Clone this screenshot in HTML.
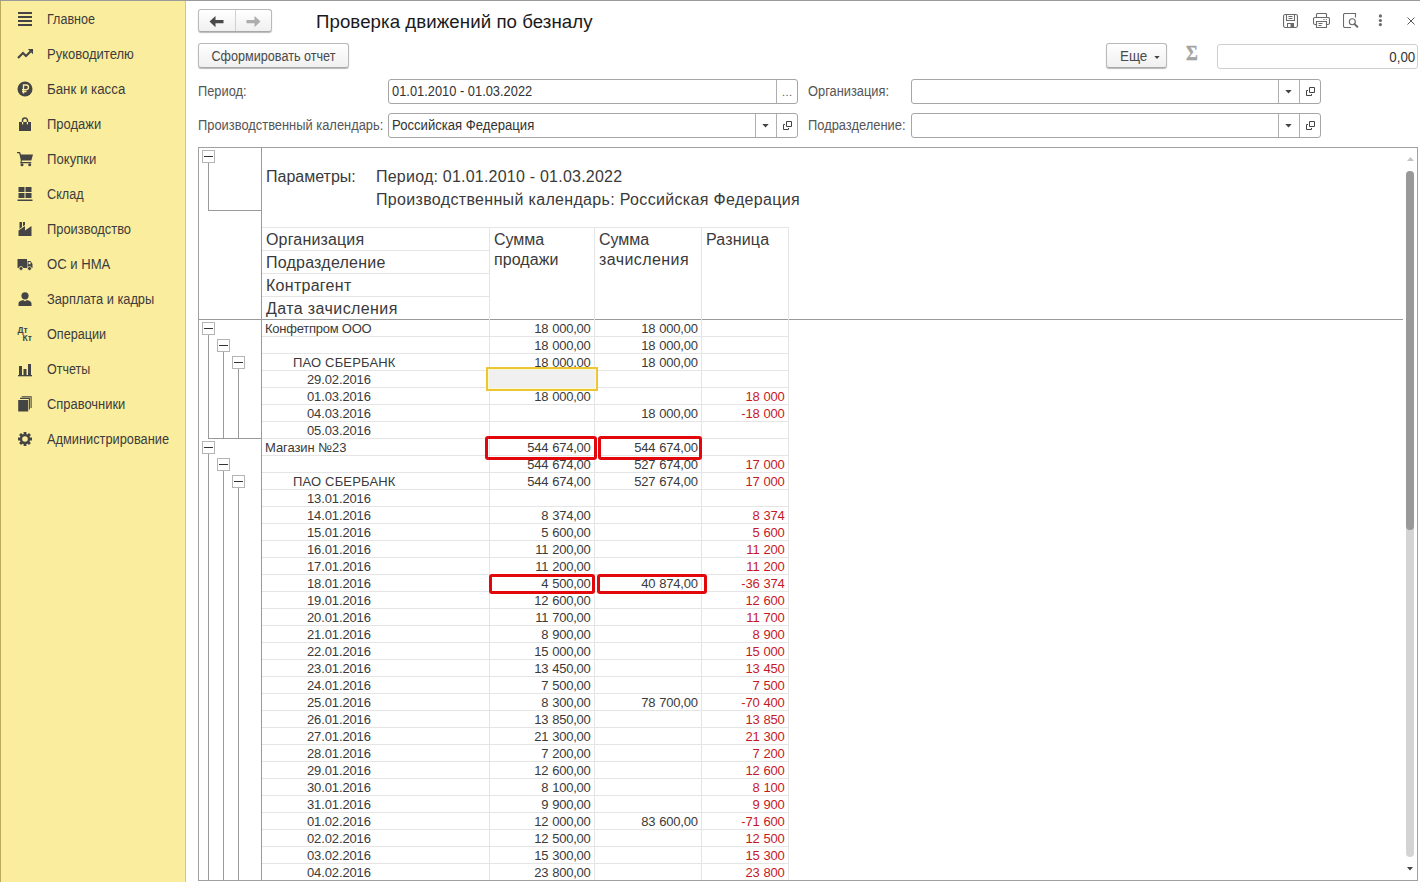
<!DOCTYPE html>
<html lang="ru"><head><meta charset="utf-8"><title>Проверка движений по безналу</title>
<style>
*{box-sizing:border-box;margin:0;padding:0}
html,body{width:1420px;height:882px;overflow:hidden;background:#fff}
body{position:relative;font-family:"Liberation Sans",sans-serif;font-size:13px;color:#333}
.abs{position:absolute}
#side{position:absolute;left:0;top:0;width:186px;height:882px;background:#fbed9e;border-right:1px solid #d9c873;border-left:1px solid #b9a95f}
#topline{position:absolute;left:0;top:0;width:1420px;height:1px;background:#9a9a9a}
.nav{position:absolute;left:47px;font-size:14px;color:#3c3c3c;white-space:nowrap;line-height:16px;transform-origin:0 50%}
.ico{position:absolute;left:17px;width:16px;height:16px}
.lbl{position:absolute;font-size:14px;color:#555;white-space:nowrap;line-height:16px;transform-origin:0 50%}
.btn{position:absolute;border:1px solid #b9b9b9;border-bottom-color:#a8a8a8;border-radius:3px;background:linear-gradient(#ffffff,#f0f0f0);box-shadow:0 1px 1px rgba(0,0,0,0.28);font-size:13px;color:#4a4a4a;white-space:nowrap;text-align:center}
.inp{position:absolute;border:1px solid #a6a6a6;border-radius:3px;background:#fff;height:25px}
.inp .t{position:absolute;left:3px;top:3px;line-height:16px;font-size:14px;color:#333;white-space:nowrap;transform-origin:0 50%}
.sep{position:absolute;top:0;width:1px;height:23px;background:#b0b0b0}
#sheet{position:absolute;left:198px;top:147px;width:1220px;height:734px;border:1px solid #a0a0a0;background:#fff;overflow:hidden}
.hl{position:absolute;height:1px;background:#e5e5e5}
.vl{position:absolute;width:1px;background:#e5e5e5}
.gl{position:absolute;background:#9a9a9a}
.gb{position:absolute;width:13px;height:13px;border:1px solid #b4b4b4;background:#fff}
.gb i{position:absolute;left:1px;top:5px;width:9px;height:1px;background:#333}
.c{position:absolute;font-size:13px;line-height:16px;color:#3a3a3a;white-space:nowrap}
.num{text-align:right;letter-spacing:-0.23px;word-spacing:0.6px}
.red{color:#c41a1f}
.h{position:absolute;font-size:16px;line-height:20px;color:#3a3a3a;white-space:nowrap}
.rb{position:absolute;border:3px solid #e1070b;border-radius:3px}
</style></head>
<body>
<div id="side"></div>
<svg class="ico" style="top:11px" viewBox="0 0 16 16" fill="#444"><rect x="1" y="1" width="14" height="2"/><rect x="1" y="5" width="14" height="2"/><rect x="1" y="9" width="14" height="2"/><rect x="1" y="13" width="14" height="2"/></svg>
<div class="nav" style="top:11px;transform:scaleX(0.8973)">Главное</div>
<svg class="ico" style="top:46px" viewBox="0 0 16 16" fill="#444"><path d="M1 11.900 L6 6.900 L9 9.900 L13.5 5.400" fill="none" stroke="#444" stroke-width="2.100"/><path d="M10.800 3 H16 V8.200 Z"/></svg>
<div class="nav" style="top:46px;transform:scaleX(0.9293)">Руководителю</div>
<svg class="ico" style="top:81px" viewBox="0 0 16 16" fill="#444"><circle cx="8" cy="8" r="7.5"/><path d="M6.5 12.5 V4 H9.2 a2.3 2.3 0 0 1 0 4.6 H5 M5 10.5 H9.5" fill="none" stroke="#fbed9e" stroke-width="1.4"/></svg>
<div class="nav" style="top:81px;transform:scaleX(0.9498)">Банк и касса</div>
<svg class="ico" style="top:116px" viewBox="0 0 16 16" fill="#444"><path d="M2 6 H14 V15 H2 Z"/><path d="M5.5 8 V4.5 a2.5 2.5 0 0 1 5 0 V8" fill="none" stroke="#444" stroke-width="1.5"/><rect x="5" y="6" width="1.2" height="2.4" fill="#fbed9e"/><rect x="9.8" y="6" width="1.2" height="2.4" fill="#fbed9e"/></svg>
<div class="nav" style="top:116px;transform:scaleX(0.927)">Продажи</div>
<svg class="ico" style="top:151px" viewBox="0 0 16 16" fill="#444"><path d="M0 1 H3 L4 3.500 H16 L14.3 9.5 H5 L4.500 11 H14.3 V12.2 H3 L3.900 9.5 L2.200 2.200 H0 Z"/><circle cx="5" cy="13.8" r="1.500"/><circle cx="12.7" cy="13.8" r="1.500"/></svg>
<div class="nav" style="top:151px;transform:scaleX(0.9381)">Покупки</div>
<svg class="ico" style="top:186px" viewBox="0 0 16 16" fill="#444"><rect x="1.5" y="1" width="6" height="5"/><rect x="8.5" y="1" width="6" height="5"/><rect x="1.5" y="7" width="6" height="5"/><rect x="8.5" y="7" width="6" height="5"/><rect x="0.5" y="13.5" width="15" height="1.5"/></svg>
<div class="nav" style="top:186px;transform:scaleX(0.9033)">Склад</div>
<svg class="ico" style="top:221px" viewBox="0 0 16 16" fill="#444"><path d="M1.5 15 V9.5 L8 5 V9.5 L14.5 5 V15 Z"/><path d="M2.5 1 H5 V6 L2.5 8 Z"/><path d="M6 1 H8 V4 L6 5.3 Z"/></svg>
<div class="nav" style="top:221px;transform:scaleX(0.9202)">Производство</div>
<svg class="ico" style="top:256px" viewBox="0 0 16 16" fill="#444"><path d="M0.5 3 H10 V12 H0.5 Z"/><path d="M10.5 5 H13.5 L15.5 8 V12 H10.5 Z"/><rect x="11.5" y="6" width="2" height="2.2" fill="#fbed9e"/><circle cx="4" cy="12.5" r="2" stroke="#fbed9e" stroke-width="0.8"/><circle cx="12.5" cy="12.5" r="2" stroke="#fbed9e" stroke-width="0.8"/></svg>
<div class="nav" style="top:256px;transform:scaleX(0.9349)">ОС и НМА</div>
<svg class="ico" style="top:291px" viewBox="0 0 16 16" fill="#444"><circle cx="8" cy="4.8" r="3.6"/><path d="M1.5 15 V12.5 C1.5 10 4.5 9.5 6 9 L8 10.2 L10 9 C11.5 9.5 14.5 10 14.5 12.500 V15 Z"/></svg>
<div class="nav" style="top:291px;transform:scaleX(0.9152)">Зарплата и кадры</div>
<svg class="ico" style="top:326px" viewBox="0 0 16 16" fill="#444"><text x="0.5" y="6.800" font-size="8.5" font-weight="bold" font-family="Liberation Sans, sans-serif">Дт</text><text x="5.500" y="15.2" font-size="8.5" font-weight="bold" font-family="Liberation Sans, sans-serif">Кт</text></svg>
<div class="nav" style="top:326px;transform:scaleX(0.9025)">Операции</div>
<svg class="ico" style="top:361px" viewBox="0 0 16 16" fill="#444"><rect x="2" y="5" width="3" height="9"/><rect x="6.500" y="8" width="3" height="6"/><rect x="11" y="3" width="3" height="11"/><rect x="1" y="14" width="14" height="1.3"/></svg>
<div class="nav" style="top:361px;transform:scaleX(0.8927)">Отчеты</div>
<svg class="ico" style="top:396px" viewBox="0 0 16 16" fill="#444"><rect x="1.2" y="4" width="10" height="11.5"/><path d="M3 2.400 H12.4 V13.4 M4.700 0.7 H14.1 V12" fill="none" stroke="#444" stroke-width="1.1"/></svg>
<div class="nav" style="top:396px;transform:scaleX(0.9232)">Справочники</div>
<svg class="ico" style="top:431px" viewBox="0 0 16 16" fill="#444"><circle cx="8" cy="8" r="4" fill="none" stroke="#444" stroke-width="2.400"/><g stroke="#444" stroke-width="2.800"><path d="M8 1 V3.500 M8 12.5 V15 M1 8 H3.500 M12.5 8 H15 M3.050 3.050 L4.800 4.800 M11.2 11.2 L12.95 12.95 M3.050 12.95 L4.800 11.2 M11.2 4.800 L12.95 3.050"/></g></svg>
<div class="nav" style="top:431px;transform:scaleX(0.9139)">Администрирование</div>
<div id="topline"></div>
<div class="btn" style="left:198px;top:9px;width:74px;height:23px"><div class="abs" style="left:36px;top:0;width:1px;height:21px;background:#d0d0d0"></div><svg class="abs" style="left:10px;top:5px" width="16" height="13" viewBox="0 0 16 13"><path d="M0.5 6.600 L6.5 1 V4.900 H14.5 V8.300 H6.5 V12.2 Z" fill="#484848"/></svg><svg class="abs" style="left:46px;top:5px" width="16" height="13" viewBox="0 0 16 13"><path d="M15.5 6.600 L9.5 1 V4.900 H1.500 V8.300 H9.5 V12.2 Z" fill="#adadad"/></svg></div>
<div class="abs" style="left:316px;top:11px;letter-spacing:0.07px;font-size:18.67px;line-height:22px;color:#1a1a1a;white-space:nowrap">Проверка движений по безналу</div>
<svg class="abs" style="left:1283px;top:14px" width="15" height="14" viewBox="0 0 15 14" fill="none" stroke="#6a6a6a" stroke-width="1.1"><rect x="0.55" y="0.55" width="13.9" height="12.9" rx="1.6"/><path d="M3.500 0.6 V6.5 H11.5 V0.6 M5.500 2.5 H9.5 M5.500 4.500 H9.5"/><path d="M4.500 13.4 V9.5 H10.5 V13.4"/><rect x="7.5" y="10" width="2.5" height="3.500" fill="#6a6a6a" stroke="none"/></svg>
<svg class="abs" style="left:1313px;top:13px" width="17" height="15" viewBox="0 0 17 15" fill="none" stroke="#6a6a6a" stroke-width="1.1"><path d="M3.500 4.500 V1.500 a1 1 0 0 1 1 -1 H12.5 a1 1 0 0 1 1 1 V4.500"/><path d="M3.500 11.5 H2 a1.500 1.500 0 0 1 -1.500 -1.500 V6 a1.500 1.500 0 0 1 1.500 -1.500 H15 a1.500 1.500 0 0 1 1.500 1.500 V10 a1.500 1.500 0 0 1 -1.500 1.500 H13.5"/><path d="M3.500 8.5 H13.5 V14.5 H3.500 Z M5.500 10.5 H9.5 M5.500 12.5 H8.5 M10.5 6.5 H11.5 M12.8 6.5 H13.8"/></svg>
<svg class="abs" style="left:1343px;top:13px" width="16" height="15" viewBox="0 0 16 15" fill="none" stroke="#6a6a6a" stroke-width="1.1"><path d="M8 14.5 H2 a1.500 1.500 0 0 1 -1.500 -1.500 V2 a1.500 1.500 0 0 1 1.500 -1.500 H12.5 V4.500"/><circle cx="9.3" cy="8.800" r="3"/><path d="M11.6 11.1 L14.3 13.8" stroke-width="2" stroke-linecap="round"/></svg>
<svg class="abs" style="left:1378px;top:14px" width="5" height="14" viewBox="0 0 5 14" fill="#6a6a6a"><circle cx="2.400" cy="1.900" r="1.600"/><circle cx="2.400" cy="6.500" r="1.600"/><circle cx="2.400" cy="10.600" r="1.600"/></svg>
<svg class="abs" style="left:1407px;top:17px" width="8" height="8" viewBox="0 0 8 8" stroke="#5a5a5a" stroke-width="1"><path d="M0.5 0.5 L7.5 7.5 M7.5 0.5 L0.5 7.5"/></svg>
<div class="btn" style="left:198px;top:43px;width:151px;height:25px;line-height:25px;font-size:14px"><div style="transform:scaleX(0.9019)">Сформировать отчет</div></div>
<div class="btn" style="left:1106px;top:43px;width:61px;height:25px;line-height:25px;text-align:left;padding-left:13px;font-size:14px"><div style="transform:scaleX(0.96);transform-origin:0 50%">Еще</div><svg class="abs" style="left:47px;top:12px" width="6" height="3" viewBox="0 0 6 3"><path d="M0.3 0 H5.700 L3 3 Z" fill="#444"/></svg></div>
<div class="abs" style="left:1186px;top:41px;width:12px;font-size:21px;line-height:24px;font-weight:bold;font-family:Liberation Serif,DejaVu Serif,serif;color:#a4a4a4;-webkit-text-stroke:0.4px #a4a4a4;transform:scaleX(0.86);transform-origin:0 0">Σ</div>
<div class="inp" style="left:1217px;top:44px;width:201px;height:25px;border-color:#cfcfcf"><div class="t" style="left:auto;right:2px;top:4px;transform-origin:100% 50%;transform:scaleX(0.95)">0,00</div></div>
<div class="lbl" style="left:198px;top:83px;transform:scaleX(0.9171)">Период:</div>
<div class="inp" style="left:388px;top:79px;width:410px"><div class="t" style="transform:scaleX(0.9189)">01.01.2010 - 01.03.2022</div><div class="sep" style="left:387px"></div><div class="abs" style="left:393px;top:4px;font-size:11px;line-height:16px;color:#555;letter-spacing:0.5px">...</div></div>
<div class="lbl" style="left:808px;top:83px;transform:scaleX(0.917)">Организация:</div>
<div class="inp" style="left:911px;top:79px;width:410px"><div class="sep" style="left:366px"></div><div class="sep" style="left:387px"></div><svg class="abs" style="left:373px;top:10px" width="7" height="4" viewBox="0 0 7 4"><path d="M0.3 0 H6.700 L3.500 3.600 Z" fill="#444"/></svg><svg class="abs" style="left:394px;top:7px" width="9" height="9" viewBox="0 0 9 9" fill="none" stroke="#444" stroke-width="1"><path d="M3.500 0.5 H8.5 V5.500 H3.500 Z"/><path d="M2 3.500 H0.5 V8.5 H5.500 V7"/></svg></div>
<div class="lbl" style="left:198px;top:117px;transform:scaleX(0.9203)">Производственный календарь:</div>
<div class="inp" style="left:388px;top:113px;width:410px"><div class="t" style="transform:scaleX(0.9367)">Российская Федерация</div><div class="sep" style="left:366px"></div><div class="sep" style="left:387px"></div><svg class="abs" style="left:373px;top:10px" width="7" height="4" viewBox="0 0 7 4"><path d="M0.3 0 H6.700 L3.500 3.600 Z" fill="#444"/></svg><svg class="abs" style="left:394px;top:7px" width="9" height="9" viewBox="0 0 9 9" fill="none" stroke="#444" stroke-width="1"><path d="M3.500 0.5 H8.5 V5.500 H3.500 Z"/><path d="M2 3.500 H0.5 V8.5 H5.500 V7"/></svg></div>
<div class="lbl" style="left:808px;top:117px;transform:scaleX(0.9206)">Подразделение:</div>
<div class="inp" style="left:911px;top:113px;width:410px"><div class="sep" style="left:366px"></div><div class="sep" style="left:387px"></div><svg class="abs" style="left:373px;top:10px" width="7" height="4" viewBox="0 0 7 4"><path d="M0.3 0 H6.700 L3.500 3.600 Z" fill="#444"/></svg><svg class="abs" style="left:394px;top:7px" width="9" height="9" viewBox="0 0 9 9" fill="none" stroke="#444" stroke-width="1"><path d="M3.500 0.5 H8.5 V5.500 H3.500 Z"/><path d="M2 3.500 H0.5 V8.5 H5.500 V7"/></svg></div>
<div id="sheet"><div class="gl" style="left:62px;top:0;width:1px;height:734px"></div><div class="gl" style="left:0;top:171px;width:1204px;height:1px"></div><div class="hl" style="left:63px;top:79px;width:527px"></div><div class="hl" style="left:63px;top:102px;width:227px"></div><div class="hl" style="left:63px;top:125px;width:227px"></div><div class="hl" style="left:63px;top:148px;width:227px"></div><div class="vl" style="left:290px;top:79px;height:655px"></div><div class="vl" style="left:395px;top:79px;height:655px"></div><div class="vl" style="left:502px;top:79px;height:655px"></div><div class="vl" style="left:589px;top:79px;height:655px"></div><div class="hl" style="left:63px;top:188px;width:527px"></div><div class="hl" style="left:63px;top:205px;width:527px"></div><div class="hl" style="left:63px;top:222px;width:527px"></div><div class="hl" style="left:63px;top:239px;width:527px"></div><div class="hl" style="left:63px;top:256px;width:527px"></div><div class="hl" style="left:63px;top:273px;width:527px"></div><div class="hl" style="left:63px;top:290px;width:527px"></div><div class="hl" style="left:63px;top:307px;width:527px"></div><div class="hl" style="left:63px;top:324px;width:527px"></div><div class="hl" style="left:63px;top:341px;width:527px"></div><div class="hl" style="left:63px;top:358px;width:527px"></div><div class="hl" style="left:63px;top:375px;width:527px"></div><div class="hl" style="left:63px;top:392px;width:527px"></div><div class="hl" style="left:63px;top:409px;width:527px"></div><div class="hl" style="left:63px;top:426px;width:527px"></div><div class="hl" style="left:63px;top:443px;width:527px"></div><div class="hl" style="left:63px;top:460px;width:527px"></div><div class="hl" style="left:63px;top:477px;width:527px"></div><div class="hl" style="left:63px;top:494px;width:527px"></div><div class="hl" style="left:63px;top:511px;width:527px"></div><div class="hl" style="left:63px;top:528px;width:527px"></div><div class="hl" style="left:63px;top:545px;width:527px"></div><div class="hl" style="left:63px;top:562px;width:527px"></div><div class="hl" style="left:63px;top:579px;width:527px"></div><div class="hl" style="left:63px;top:596px;width:527px"></div><div class="hl" style="left:63px;top:613px;width:527px"></div><div class="hl" style="left:63px;top:630px;width:527px"></div><div class="hl" style="left:63px;top:647px;width:527px"></div><div class="hl" style="left:63px;top:664px;width:527px"></div><div class="hl" style="left:63px;top:681px;width:527px"></div><div class="hl" style="left:63px;top:698px;width:527px"></div><div class="hl" style="left:63px;top:715px;width:527px"></div><div class="hl" style="left:63px;top:732px;width:527px"></div><div class="h" style="left:67px;top:19px">Параметры:</div><div class="h" style="left:177px;top:19px;letter-spacing:0.223px">Период: 01.01.2010 - 01.03.2022</div><div class="h" style="left:177px;top:42px;letter-spacing:0.33px">Производственный календарь: Российская Федерация</div><div class="h" style="left:67px;top:82px;letter-spacing:0.164px">Организация</div><div class="h" style="left:67px;top:105px;letter-spacing:0.224px">Подразделение</div><div class="h" style="left:67px;top:128px;letter-spacing:0.277px">Контрагент</div><div class="h" style="left:67px;top:151px;letter-spacing:0.4px">Дата зачисления</div><div class="h" style="left:295px;top:82px"><span style="letter-spacing:-0.015px">Сумма</span><br><span style="letter-spacing:0.088px">продажи</span></div><div class="h" style="left:400px;top:82px"><span style="letter-spacing:-0.015px">Сумма</span><br><span style="letter-spacing:0.417px">зачисления</span></div><div class="h" style="left:507px;top:82px"><span style="letter-spacing:0.181px">Разница</span></div><div class="c" style="left:66px;top:173px;letter-spacing:-0.237px">Конфетпром ООО</div><div class="c num" style="left:291px;width:100.60000000000002px;top:173px">18 000,00</div><div class="c num" style="left:397px;width:101.70000000000005px;top:173px">18 000,00</div><div class="c num" style="left:291px;width:100.60000000000002px;top:190px">18 000,00</div><div class="c num" style="left:397px;width:101.70000000000005px;top:190px">18 000,00</div><div class="c" style="left:94px;top:207px;letter-spacing:0.159px">ПАО СБЕРБАНК</div><div class="c num" style="left:291px;width:100.60000000000002px;top:207px">18 000,00</div><div class="c num" style="left:397px;width:101.70000000000005px;top:207px">18 000,00</div><div class="c" style="left:108px;top:224px;letter-spacing:-0.126px">29.02.2016</div><div class="c" style="left:108px;top:241px;letter-spacing:-0.126px">01.03.2016</div><div class="c num" style="left:291px;width:100.60000000000002px;top:241px">18 000,00</div><div class="c num red" style="left:503px;width:82.39999999999998px;top:241px">18 000</div><div class="c" style="left:108px;top:258px;letter-spacing:-0.126px">04.03.2016</div><div class="c num" style="left:397px;width:101.70000000000005px;top:258px">18 000,00</div><div class="c num red" style="left:503px;width:82.39999999999998px;top:258px">-18 000</div><div class="c" style="left:108px;top:275px;letter-spacing:-0.126px">05.03.2016</div><div class="c" style="left:66px;top:292px;letter-spacing:-0.069px">Магазин №23</div><div class="c num" style="left:291px;width:100.60000000000002px;top:292px">544 674,00</div><div class="c num" style="left:397px;width:101.70000000000005px;top:292px">544 674,00</div><div class="c num" style="left:291px;width:100.60000000000002px;top:309px">544 674,00</div><div class="c num" style="left:397px;width:101.70000000000005px;top:309px">527 674,00</div><div class="c num red" style="left:503px;width:82.39999999999998px;top:309px">17 000</div><div class="c" style="left:94px;top:326px;letter-spacing:0.159px">ПАО СБЕРБАНК</div><div class="c num" style="left:291px;width:100.60000000000002px;top:326px">544 674,00</div><div class="c num" style="left:397px;width:101.70000000000005px;top:326px">527 674,00</div><div class="c num red" style="left:503px;width:82.39999999999998px;top:326px">17 000</div><div class="c" style="left:108px;top:343px;letter-spacing:-0.126px">13.01.2016</div><div class="c" style="left:108px;top:360px;letter-spacing:-0.126px">14.01.2016</div><div class="c num" style="left:291px;width:100.60000000000002px;top:360px">8 374,00</div><div class="c num red" style="left:503px;width:82.39999999999998px;top:360px">8 374</div><div class="c" style="left:108px;top:377px;letter-spacing:-0.126px">15.01.2016</div><div class="c num" style="left:291px;width:100.60000000000002px;top:377px">5 600,00</div><div class="c num red" style="left:503px;width:82.39999999999998px;top:377px">5 600</div><div class="c" style="left:108px;top:394px;letter-spacing:-0.126px">16.01.2016</div><div class="c num" style="left:291px;width:100.60000000000002px;top:394px">11 200,00</div><div class="c num red" style="left:503px;width:82.39999999999998px;top:394px">11 200</div><div class="c" style="left:108px;top:411px;letter-spacing:-0.126px">17.01.2016</div><div class="c num" style="left:291px;width:100.60000000000002px;top:411px">11 200,00</div><div class="c num red" style="left:503px;width:82.39999999999998px;top:411px">11 200</div><div class="c" style="left:108px;top:428px;letter-spacing:-0.126px">18.01.2016</div><div class="c num" style="left:291px;width:100.60000000000002px;top:428px">4 500,00</div><div class="c num" style="left:397px;width:101.70000000000005px;top:428px">40 874,00</div><div class="c num red" style="left:503px;width:82.39999999999998px;top:428px">-36 374</div><div class="c" style="left:108px;top:445px;letter-spacing:-0.126px">19.01.2016</div><div class="c num" style="left:291px;width:100.60000000000002px;top:445px">12 600,00</div><div class="c num red" style="left:503px;width:82.39999999999998px;top:445px">12 600</div><div class="c" style="left:108px;top:462px;letter-spacing:-0.126px">20.01.2016</div><div class="c num" style="left:291px;width:100.60000000000002px;top:462px">11 700,00</div><div class="c num red" style="left:503px;width:82.39999999999998px;top:462px">11 700</div><div class="c" style="left:108px;top:479px;letter-spacing:-0.126px">21.01.2016</div><div class="c num" style="left:291px;width:100.60000000000002px;top:479px">8 900,00</div><div class="c num red" style="left:503px;width:82.39999999999998px;top:479px">8 900</div><div class="c" style="left:108px;top:496px;letter-spacing:-0.126px">22.01.2016</div><div class="c num" style="left:291px;width:100.60000000000002px;top:496px">15 000,00</div><div class="c num red" style="left:503px;width:82.39999999999998px;top:496px">15 000</div><div class="c" style="left:108px;top:513px;letter-spacing:-0.126px">23.01.2016</div><div class="c num" style="left:291px;width:100.60000000000002px;top:513px">13 450,00</div><div class="c num red" style="left:503px;width:82.39999999999998px;top:513px">13 450</div><div class="c" style="left:108px;top:530px;letter-spacing:-0.126px">24.01.2016</div><div class="c num" style="left:291px;width:100.60000000000002px;top:530px">7 500,00</div><div class="c num red" style="left:503px;width:82.39999999999998px;top:530px">7 500</div><div class="c" style="left:108px;top:547px;letter-spacing:-0.126px">25.01.2016</div><div class="c num" style="left:291px;width:100.60000000000002px;top:547px">8 300,00</div><div class="c num" style="left:397px;width:101.70000000000005px;top:547px">78 700,00</div><div class="c num red" style="left:503px;width:82.39999999999998px;top:547px">-70 400</div><div class="c" style="left:108px;top:564px;letter-spacing:-0.126px">26.01.2016</div><div class="c num" style="left:291px;width:100.60000000000002px;top:564px">13 850,00</div><div class="c num red" style="left:503px;width:82.39999999999998px;top:564px">13 850</div><div class="c" style="left:108px;top:581px;letter-spacing:-0.126px">27.01.2016</div><div class="c num" style="left:291px;width:100.60000000000002px;top:581px">21 300,00</div><div class="c num red" style="left:503px;width:82.39999999999998px;top:581px">21 300</div><div class="c" style="left:108px;top:598px;letter-spacing:-0.126px">28.01.2016</div><div class="c num" style="left:291px;width:100.60000000000002px;top:598px">7 200,00</div><div class="c num red" style="left:503px;width:82.39999999999998px;top:598px">7 200</div><div class="c" style="left:108px;top:615px;letter-spacing:-0.126px">29.01.2016</div><div class="c num" style="left:291px;width:100.60000000000002px;top:615px">12 600,00</div><div class="c num red" style="left:503px;width:82.39999999999998px;top:615px">12 600</div><div class="c" style="left:108px;top:632px;letter-spacing:-0.126px">30.01.2016</div><div class="c num" style="left:291px;width:100.60000000000002px;top:632px">8 100,00</div><div class="c num red" style="left:503px;width:82.39999999999998px;top:632px">8 100</div><div class="c" style="left:108px;top:649px;letter-spacing:-0.126px">31.01.2016</div><div class="c num" style="left:291px;width:100.60000000000002px;top:649px">9 900,00</div><div class="c num red" style="left:503px;width:82.39999999999998px;top:649px">9 900</div><div class="c" style="left:108px;top:666px;letter-spacing:-0.126px">01.02.2016</div><div class="c num" style="left:291px;width:100.60000000000002px;top:666px">12 000,00</div><div class="c num" style="left:397px;width:101.70000000000005px;top:666px">83 600,00</div><div class="c num red" style="left:503px;width:82.39999999999998px;top:666px">-71 600</div><div class="c" style="left:108px;top:683px;letter-spacing:-0.126px">02.02.2016</div><div class="c num" style="left:291px;width:100.60000000000002px;top:683px">12 500,00</div><div class="c num red" style="left:503px;width:82.39999999999998px;top:683px">12 500</div><div class="c" style="left:108px;top:700px;letter-spacing:-0.126px">03.02.2016</div><div class="c num" style="left:291px;width:100.60000000000002px;top:700px">15 300,00</div><div class="c num red" style="left:503px;width:82.39999999999998px;top:700px">15 300</div><div class="c" style="left:108px;top:717px;letter-spacing:-0.126px">04.02.2016</div><div class="c num" style="left:291px;width:100.60000000000002px;top:717px">23 800,00</div><div class="c num red" style="left:503px;width:82.39999999999998px;top:717px">23 800</div><div class="abs" style="left:287px;top:219px;width:112px;height:24px;border:2px solid #ecc634;background:#f0f0f0;box-shadow:inset 0 0 0 1px #fff9d0"></div><div class="rb" style="left:286px;top:288px;width:112px;height:24px"></div><div class="rb" style="left:399px;top:288px;width:104px;height:24px"></div><div class="rb" style="left:290px;top:426px;width:106px;height:20px"></div><div class="rb" style="left:398px;top:426px;width:110px;height:20px"></div><div class="gl" style="left:9px;top:15px;width:1px;height:47px"></div><div class="gl" style="left:9px;top:62px;width:53px;height:1px"></div><div class="gb" style="left:3px;top:2px"><i></i></div><div class="gl" style="left:9px;top:187px;width:1px;height:103px"></div><div class="gl" style="left:24px;top:204px;width:1px;height:86px"></div><div class="gl" style="left:39px;top:221px;width:1px;height:69px"></div><div class="gl" style="left:9px;top:290px;width:53px;height:1px"></div><div class="gb" style="left:3px;top:174px"><i></i></div><div class="gb" style="left:18px;top:191px"><i></i></div><div class="gb" style="left:33px;top:208px"><i></i></div><div class="gl" style="left:9px;top:306px;width:1px;height:500px"></div><div class="gl" style="left:24px;top:323px;width:1px;height:500px"></div><div class="gl" style="left:39px;top:340px;width:1px;height:500px"></div><div class="gb" style="left:3px;top:293px"><i></i></div><div class="gb" style="left:18px;top:310px"><i></i></div><div class="gb" style="left:33px;top:327px"><i></i></div><div class="abs" style="left:1207px;top:23px;width:8px;height:686px;border-radius:4px;background:#d4d4d4"></div><div class="abs" style="left:1207px;top:23px;width:8px;height:359px;border-radius:4px;background:#999"></div><svg class="abs" style="left:1208px;top:9px" width="7" height="4" viewBox="0 0 7 4"><path d="M0 4 H7 L3.500 0 Z" fill="#c4c4c4"/></svg><svg class="abs" style="left:1208px;top:719px" width="6" height="4" viewBox="0 0 6 4"><path d="M0 0 H6 L3 3.500 Z" fill="#444"/></svg></div>
</body></html>
